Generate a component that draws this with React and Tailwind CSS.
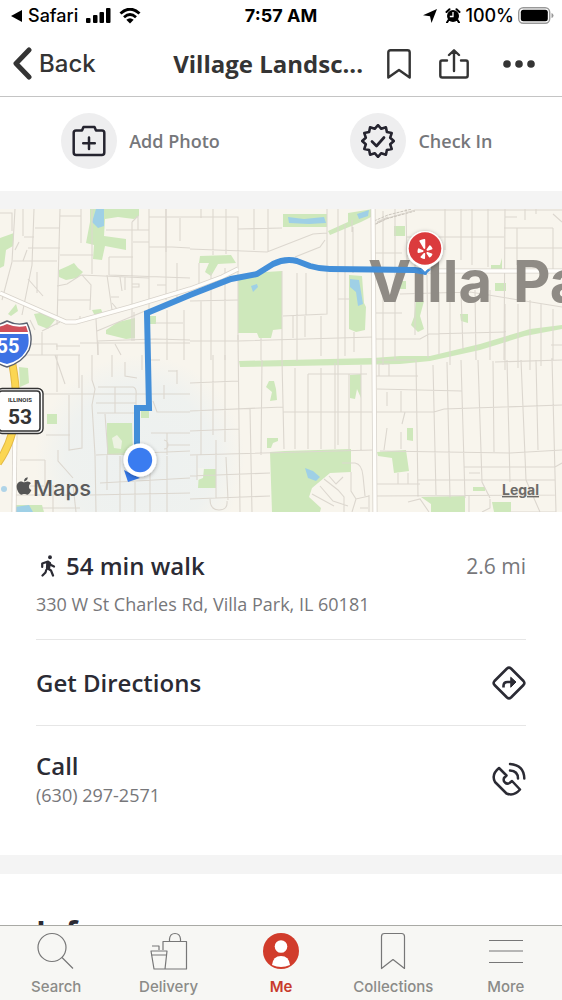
import React from "react";
import { FaApple, FaYelp } from "react-icons/fa";

const PARKS = [
  "M90 209H139V216L134 219L118 217L105 219L104 236L126 239V250L105 246L102 260L93 259L94 245L86 243L90 222Z",
  "M0 238L14 233L13 246L6 250L4 266L0 268Z",
  "M59 270L68 266L74 263L78 268L83 272L77 278L66 280L59 277Z",
  "M8 314L16 304L18 311L11 316Z",
  "M34 314L46 312L55 320L48 329L38 325Z",
  "M92 310L101 309L103 314L94 314Z",
  "M106 330L118 322L135 318V338L126 339L106 334Z",
  "M150 316H156V324H150Z",
  "M200 256L231 255L236 263L218 264L211 276L205 272L209 263H199Z",
  "M283 214H327V227H283Z",
  "M328 231L348 222L348 213L373 209V216L361 222L330 235Z",
  "M238 277L250 273L282 271V329L273 330L271 338H259L257 333L238 333Z",
  "M349 275L362 276L364 303L366 307L365 330L356 332L349 329Z",
  "M394 226H405V236H394Z",
  "M491 265H500L502 258V269H491Z",
  "M495 283H506V291H495Z",
  "M399 281H406V289H399Z",
  "M416 301L424 301L420 316L424 329L418 332L411 325L414 317Z",
  "M460 314H468V323L461 321Z",
  "M239 361L373 358L400 356L430 356L480 344L530 329L562 325V329L525 336L480 350L430 361L400 364L240 367Z",
  "M269 381L274 381L276 389L277 400L270 401L272 392L266 387Z",
  "M350 375L361 374L361 398L357 389L355 399L350 398Z",
  "M267 438H278V441L273 443L271 448H267Z",
  "M270 452L285 451L351 449V472L330 473L312 488L309 497L321 508L320 512H272Z",
  "M199 471L204 469H216V488H198Z",
  "M107 423H132L133 455H107Z",
  "M47 414H57V424H47Z",
  "M19 367L28 368L29 383L20 387Z",
  "M15 505H42L44 512H15Z",
  "M377 452L406 450L409 471L394 473L392 458L378 456Z",
  "M407 428H413V441L407 440Z",
  "M421 497L465 496V512H431L431 504Z",
  "M473 487H485V491H473Z",
  "M492 502H511V512H494Z",
  "M141 411H149V418H141Z",
];

const WATER = [
  "M96 209H104V226L98 228L92 222Z",
  "M288 217L304 219L324 217L326 223L309 224L289 223Z",
  "M357 214L369 210L368 216L359 219Z",
  "M350 279L359 280L361 292L363 304L358 306L356 292L350 287Z",
  "M251 286L257 284L258 287L253 292Z",
  "M305 468L313 471L320 477L316 481L308 478Z",
  "M15 507L29 505L33 512H15Z",
];

const STREETS = [
  "M0 213H12V231M15 209L12 262L2 300M23 209V236M34 209L32 265L22 315M24 237H34M60 209L57 325M60 216H81M35 228H60M28 248H60M13 261H57M60 255H93M81 209V243M82 275L91 285L90 310M92 209V274",
  "M106 230H149M132 222L138 216V230M132 222V341M133 242H149M134 312V341M149 209V310M166 209V252M180 218V241M149 217H190M149 247H172L190 248M109 257H133M109 257V275L190 278M107 275L112 310M120 277L122 291M125 277V290M132 284H139V287H132Z",
  "M57 286L67 284L81 275L149 278M57 300H90M37 272V293M28 279L43 296M157 285H166M166 209V300M177 263V300M15 250L19 242M23 261L27 250M80 316V322M57 350V344H0M42 332V355M56 346H80M98 342V355M115 344L121 355",
  "M42 331L60 322M30 320L35 330M97 331L145 311M97 341L155 339L190 340M80 343H190M167 310V360M184 310V360M155 323H183M96 319L98 355M112 303L118 310M111 297H119",
  "M190 217H238V292M201 209V218M213 209V255M226 209V254M190 249L267 252L313 234L327 233M238 229L282 228M254 209V250M268 209V251M238 252V340M295 257L320 247L325 240M327 209V314L283 316M282 271V360M297 273V361M306 273V315M338 209V445M352 220V232M353 227V273M345 224V356M338 299H350M354 332V352",
  "M199 263V294M211 272V360M225 268V360M190 301L238 300M201 301V360M190 341H238L373 337M321 316V356M305 316V337M293 316V338M261 338V360",
  "M190 383L238 381M190 411L283 407M190 431L239 429M190 455L373 450M190 476L270 473M190 499L270 496M201 360V455M213 355V435M225 355V442M238 335L240 512M250 408L252 512M262 360L261 455M282 360L284 449M295 368V449M308 374V449M321 368V449M335 363V449M349 374V450M361 365V450M308 374H367M283 412H373M197 455V480M216 440V498M210 499Q210 510 219 510Q228 510 227 501M226 457L228 500",
  "M342 463H355Q362 464 363 476L365 496M351 472V491L356 499L369 496M320 486L333 501L348 506M324 479L338 490L344 497V512M329 476L336 484L343 477M312 494L334 506M356 499L352 512M369 495V512M360 508H368",
  "M373 225L388 218L415 210H562M377 222L388 217M372 253H402M383 211V365M395 209V360M406 209L407 260M406 237H504M445 209V250M461 209V260M472 209V265M488 209V267M505 209L504 360M517 228V265M553 228V269M504 228H553M505 248H562M505 217H517M525 209V220M536 209V214M553 214L562 222",
  "M415 238V335M427 275L428 358M439 292V355M450 285V365M461 291L463 350M475 290L476 360M490 290V360M505 304V370M372 313H402M372 339H420L429 334L506 332M400 294L470 292L562 307M541 304V366M551 345H562M553 309V360M518 304V368M530 300V370",
  "M373 360H416L418 497M433 365L436 495M447 362L450 498M461 360L465 498M478 360L482 482L490 498M493 361L494 452M507 360L510 482M521 360L526 480L540 512M536 360L538 450M552 358L556 512M375 376H418M377 389L462 391M376 412H434L444 409L562 405M380 451L510 453L562 450M464 467H555L562 463M418 480H555M376 484H420M376 496L555 495M495 362L562 360M379 376V364H389V376M387 392V406M401 391V412M405 412L402 424M387 428L384 450M401 432V449M398 473V484M408 473V484M469 473H480M408 502L420 499L429 512M490 499V508L482 512M469 496V512M510 512H556",
  "M0 355H80M55 355L65 384M79 355V388M92 355V380L95 389L92 405L95 455L96 512M57 355V392M112 355V377M125 362V376L137 378M142 355V370M20 394H190M69 395V450L82 448V375M98 387H133Q137 388 136 396V412M96 403H136M115 387V413M97 413H134M105 414L108 455M107 455V490M120 456V512M135 482V512M150 460V512M167 456V512M96 455L190 451M100 483L190 478M90 495L190 493M151 433H190M167 433V455M164 440Q168 441 168 445Q168 449 164 449M168 445H190M153 401L157 412H190M164 385V399M158 394H168M177 370V384M168 371H177M150 374V360H160M45 460V485M58 450V461L73 478M46 435H70M20 460H45M45 486H15M53 485V512M73 485L76 512M15 495H75M42 508H80",
];

const MAJOR = [
  "M0 293L66 322H76L130 307L190 289L222 277L238 269",
  "M373 209L374 360L375 512",
  "M415 271H562",
  "M15 426L14 512",
];

function RouteMap() {
  return (
    <svg
      className="block h-[303px] w-full bg-[#f8f5ed]"
      viewBox="0 209 562 303"
      preserveAspectRatio="xMidYMid slice"
      role="img"
      aria-label="Walking route to Villa Park"
    >
      <defs>
        <radialGradient id="accuracy">
          <stop offset="0" stopColor="#ecf0f0" stopOpacity="0.9" />
          <stop offset="0.7" stopColor="#ebf0f0" stopOpacity="0.7" />
          <stop offset="1" stopColor="#ebf0f0" stopOpacity="0" />
        </radialGradient>
        <filter id="pinShadow" x="-30%" y="-30%" width="160%" height="160%">
          <feDropShadow dx="0" dy="1" stdDeviation="2" floodColor="#000" floodOpacity="0.35" />
        </filter>
      </defs>
      <rect x="0" y="209" width="562" height="303" fill="#f8f5ed" />
      <circle cx="140" cy="460" r="105" fill="url(#accuracy)" />
      <g fill="#cee8bb">
        {PARKS.map((d) => <path key={d} d={d} />)}
      </g>
      <g fill="#9fd0e6">
        {WATER.map((d) => <path key={d} d={d} />)}
      </g>
      <circle cx="4" cy="489" r="3" fill="#afd4e8" />
      <path d="M112 438L117 435L122 441L121 449L114 448Z" fill="#edf2e2" />
      <path d="M198 468H204L203 478L198 480Z" fill="#f3f4ee" />
      <g fill="none" stroke="#dcd7cf" strokeWidth="1.1">
        {STREETS.map((d) => <path key={d} d={d} />)}
      </g>
      <path d="M372 226L386 219L415 211M374 221L388 215L412 209" fill="none" stroke="#cbc6bd" strokeWidth="1" strokeDasharray="3 1" />
      <g fill="none" stroke="#d8d3cb" strokeWidth="5">
        {MAJOR.map((d) => <path key={d} d={d} />)}
      </g>
      <g fill="none" stroke="#fffefb" strokeWidth="3.4">
        {MAJOR.map((d) => <path key={d} d={d} />)}
      </g>
      <path d="M12 362Q17 388 16 410Q14 440 -2 463" fill="none" stroke="#e3b944" strokeWidth="8" />
      <path d="M12 362Q17 388 16 410Q14 440 -2 463" fill="none" stroke="#fbd652" strokeWidth="6" />

      <g fontSize="58" className="fill-[#8f8b85] font-['Inter',sans-serif] font-bold">
        <text x="368" y="302">Villa</text>
        <text x="513" y="302">Park</text>
      </g>

      <path
        d="M137 450V408H149L147 313L190 295L231 279L257 274L273 264Q285 258 297 261L310 266Q320 269 330 269L415 270L427 272"
        fill="none" stroke="#438fd9" strokeWidth="6" strokeLinejoin="miter"
      />

      <path d="M-14 327Q-3 326 7 321Q17 326 27 323Q34 338 29 350Q23 362 7 367Q-9 362 -15 350Z" fill="#fff" stroke="#59606f" strokeWidth="1.4" />
      <path d="M-12 329Q-2 328 7 324Q16 328 26 326L28 332H-14Z" fill="#cf505a" />
      <path d="M-14 334H28Q30 345 26 351Q20 361 7 364Q-6 361 -14 350Z" fill="#3d72e4" />
      <text x="8" y="353" fontSize="20" textAnchor="middle" className="fill-white font-['Roboto',sans-serif] font-bold">55</text>

      <rect x="-3" y="388.500" width="46" height="45" rx="5" fill="#fff" stroke="#333" strokeWidth="1.400" />
      <rect x="-1" y="391" width="41" height="40" rx="3" fill="#fff" stroke="#333" strokeWidth="1.600" />
      <text x="20" y="402" fontSize="6" textAnchor="middle" className="fill-[#333] font-['Roboto',sans-serif] font-bold">ILLINOIS</text>
      <text x="20" y="424" fontSize="21" textAnchor="middle" className="fill-[#333] font-['Roboto',sans-serif] font-bold">53</text>

      <path d="M124 470L128 482L140 478Z" fill="#3578e8" />
      <circle cx="140" cy="460" r="16.500" fill="#fff" filter="url(#pinShadow)" />
      <circle cx="140" cy="460" r="12.200" fill="#3a7cf0" />

      <path d="M425 272Q421 267 416 265Q407 260 407 249A18 18 0 0 1 443 249Q443 260 434 265Q429 267 425 272Z" fill="#fff" filter="url(#pinShadow)" />
      <path d="M419 269.500L425 275L431 269.500L428 269L425 272L422 269Z" fill="#438fd9" />
      <circle cx="425" cy="248.500" r="16.300" fill="#db3b3d" />
      <FaYelp x="415" y="239" size={20} color="#fff" />

      <FaApple x="14" y="476" size={20} color="#555" />
      <text x="33" y="496" fontSize="22" className="fill-[#5c5c5c] font-['Inter',sans-serif] font-medium">Maps</text>
      <a href="#legal">
        <text x="502" y="495" fontSize="14" className="fill-[#6d6b68] font-['Inter',sans-serif] font-bold underline">Legal</text>
      </a>
    </svg>
  );
}

function StatusBar() {
  return (
    <div className="grid h-[31px] grid-cols-3 items-center px-2 font-['Inter',sans-serif] text-lg leading-7 text-black">
      <div className="flex items-center gap-1 font-medium">
        <svg className="h-3 w-4" viewBox="0 0 16 12"><path d="M3 6L14 0V12Z" /></svg>
        <a href="#safari">Safari</a>
        <svg className="ml-1 h-4 w-[25px]" viewBox="0 0 25 16">
          <rect x="0" y="10" width="4.500" height="5" rx="1" />
          <rect x="7" y="7" width="4.500" height="8" rx="1" />
          <rect x="13.500" y="4" width="4.500" height="11" rx="1" />
          <rect x="20" y="0" width="4.500" height="15" rx="1" />
        </svg>
        <svg className="ml-1 h-4 w-[22px]" viewBox="0 0 22 16" fill="none" stroke="#000">
          <path d="M1.500 5.500Q11 -3 20.500 5.500" strokeWidth="3" />
          <path d="M5 9.200Q11 3.800 17 9.200" strokeWidth="2.800" />
          <path d="M11 15.500L7.300 11.800Q11 8.600 14.700 11.800Z" fill="#000" stroke="none" />
        </svg>
      </div>
      <div className="text-center font-bold">7:57 AM</div>
      <div className="flex items-center justify-end gap-1 font-medium">
        <svg className="size-[14px]" viewBox="0 0 14 14"><path d="M14 0L8.500 14L7 7.200L0 6.300Z" /></svg>
        <svg className="ml-1 h-[15px] w-4" viewBox="0 0 16 15">
          <circle cx="8" cy="8" r="6" />
          <path d="M1.500 4L4.500 1.200M14.500 4L11.500 1.200M3.500 12L2 14.500M12.500 12L14 14.500" stroke="#000" strokeWidth="2" strokeLinecap="round" />
          <path d="M8 4V8.500H4.800" fill="none" stroke="#fff" strokeWidth="1.300" />
        </svg>
        <span>100%</span>
        <svg className="h-[17px] w-9" viewBox="0 0 36 17">
          <rect x="0.700" y="0.700" width="31" height="15.600" rx="4.500" fill="#fff" stroke="#999" strokeWidth="1.400" />
          <rect x="2.800" y="2.800" width="27" height="11.400" rx="2.500" />
          <path d="M33.500 6V11Q35.500 10.500 35.500 8.500Q35.500 6.500 33.500 6Z" fill="#999" />
        </svg>
      </div>
    </div>
  );
}

function NavBar() {
  return (
    <header className="flex h-[66px] items-center border-b border-[#c4c4c4] px-3 text-[#343434]">
      <button className="flex items-center gap-[7px] font-['Inter',sans-serif] text-2xl font-medium leading-8">
        <svg className="h-[33px] w-5" viewBox="0 0 20 33" fill="none" stroke="currentColor" strokeWidth="5" strokeLinecap="round" strokeLinejoin="round">
          <path d="M17 3L4 16.500L17 30" />
        </svg>
        Back
      </button>
      <h1 className="flex-1 truncate pr-6 text-right text-2xl font-bold leading-8">Village Landsc...</h1>
      <div className="flex items-center gap-7">
        <button aria-label="Bookmark">
          <svg className="block h-[30px] w-6" viewBox="0 0 24 30" fill="none" stroke="currentColor" strokeWidth="2.400" strokeLinejoin="round">
            <path d="M1.300 28.500V3.500Q1.300 1.300 3.500 1.300H20.500Q22.700 1.300 22.700 3.500V28.500L12 21Z" />
          </svg>
        </button>
        <button aria-label="Share">
          <svg className="block h-[30px] w-[30px]" viewBox="0 0 30 30" fill="none" stroke="currentColor" strokeWidth="2.400" strokeLinecap="round" strokeLinejoin="round">
            <path d="M8 11.500H3Q1.300 11.500 1.300 13.200V26.500Q1.300 28.500 3.300 28.500H26.700Q28.700 28.500 28.700 26.500V13.200Q28.700 11.500 27 11.500H22M15 22V1.500M10 6L15 1.300L20 6" />
          </svg>
        </button>
        <button aria-label="More options" className="ml-1.5 mr-[15px]">
          <svg className="block h-2 w-8" viewBox="0 0 32 8" fill="currentColor">
            <circle cx="4" cy="4" r="3.800" /><circle cx="16" cy="4" r="3.800" /><circle cx="28" cy="4" r="3.800" />
          </svg>
        </button>
      </div>
    </header>
  );
}

function starPoints() {
  return Array.from({ length: 24 }, (_, i) => {
    const radius = i % 2 === 0 ? 15.8 : 12.6;
    const angle = (i * Math.PI) / 12 - Math.PI / 2;
    return `${(17 + radius * Math.cos(angle)).toFixed(1)},${(17 + radius * Math.sin(angle)).toFixed(1)}`;
  }).join(" ");
}

function Actions() {
  return (
    <section className="grid h-[94px] grid-cols-2 pb-1.5 text-lg font-semibold text-[#76777b]">
      <button className="flex items-center justify-center gap-3">
        <span className="grid size-14 place-items-center rounded-full bg-[#eeeeef]">
          <svg className="size-[34px]" viewBox="0 0 34 34" fill="none" stroke="#25242f" strokeWidth="2.500" strokeLinecap="round" strokeLinejoin="round">
            <path d="M10 6.500L11.500 3H22.500L24 6.500H30Q32.300 6.500 32.300 8.800V28.500Q32.300 31 29.800 31H4.200Q1.700 31 1.700 28.500V8.800Q1.700 6.500 4 6.500ZM17 13.500V25M11.200 19.200H22.800" />
          </svg>
        </span>
        Add Photo
      </button>
      <button className="flex items-center justify-center gap-3">
        <span className="grid size-14 place-items-center rounded-full bg-[#eeeeef]">
          <svg className="size-[34px]" viewBox="0 0 34 34" fill="none" stroke="#25242f" strokeWidth="2.600" strokeLinecap="round" strokeLinejoin="round">
            <polygon points={starPoints()} />
            <path d="M11 17.500L15.500 22L23 13.500" strokeWidth="2.700" />
          </svg>
        </span>
        Check In
      </button>
    </section>
  );
}

function Details() {
  return (
    <section className="px-9 text-[#2b2b34]">
      <div className="flex h-[128px] flex-col justify-center gap-2 border-b border-[#e6e6e6] pt-4">
        <div className="flex items-center">
          <svg className="mx-1 h-[22px] w-4" viewBox="0 0 16 22" fill="none" stroke="currentColor" strokeWidth="2.200" strokeLinecap="round" strokeLinejoin="round">
            <circle cx="10" cy="2.200" r="1.200" fill="currentColor" strokeWidth="1.500" />
            <path d="M2.200 12V8.500L8 6.500L11 10L14 11.500M8 6.500L7 13L11 15.500L13 20.500M6.200 15L5.500 17.500L2.500 20.500" />
            <path d="M7.500 7L10 8L9 13.500H7Z" fill="currentColor" />
          </svg>
          <h2 className="ml-1.5 flex-1 text-2xl font-semibold leading-8">54 min walk</h2>
          <span className="text-[21px] leading-8 text-[#77777a]">2.6 mi</span>
        </div>
        <p className="text-lg leading-7 text-[#77777a]">330 W St Charles Rd, Villa Park, IL 60181</p>
      </div>
      <button className="flex h-[86px] w-full items-center justify-between border-b border-[#e6e6e6] text-left">
        <span className="text-2xl font-semibold leading-8">Get Directions</span>
        <svg className="size-[34px]" viewBox="0 0 34 34" fill="none" stroke="currentColor" strokeWidth="2.600" strokeLinecap="round" strokeLinejoin="round">
          <path d="M15 2.500Q17 .8 19 2.500L31.500 15Q33.200 17 31.500 19L19 31.500Q17 33.200 15 31.500L2.500 19Q.8 17 2.500 15Z" />
          <path d="M11.500 21.500V20Q11.500 16 15.500 16H20" strokeLinecap="butt" />
          <path d="M19 11.500L24 16L19 21Z" fill="currentColor" strokeWidth="1" />
        </svg>
      </button>
      <button className="flex h-[129px] w-full items-center justify-between pb-6 text-left">
        <span className="block">
          <span className="block text-2xl font-semibold leading-8">Call</span>
          <span className="block text-lg leading-[26px] text-[#77777a]">(630) 297-2571</span>
        </span>
        <svg className="size-[34px]" viewBox="0 0 34 34" fill="none" stroke="currentColor" strokeWidth="2.500" strokeLinecap="round" strokeLinejoin="round">
          <path d="M7 6L14.500 13.500L12 16Q11 19 13 20.500Q15 22.500 17.500 21L20 19L28 27.500Q22 34.500 14.500 31.500L3 20Q-1 12.500 7 6Z" />
          <path d="M18 8.500Q26 9 26 16.500M18 2Q32 3 32.300 16.500" />
        </svg>
      </button>
    </section>
  );
}

const TABS = [
  {
    label: "Search",
    icon: <path d="M15 1.500A14 14 0 1 0 15 29.500A14 14 0 1 0 15 1.500ZM25 25.500L36 36.500" />,
  },
  {
    label: "Delivery",
    icon: <path d="M13 18V9.500H36.500V37H4L1 19H17L15 37M1 23H16.500M9 18V14H2M19.500 9V7Q20 1.500 25 1.500Q30 1.500 30.500 7V9" />,
  },
  {
    label: "Me",
    active: true,
    icon: (
      <g stroke="none">
        <circle cx="19" cy="19" r="18" fill="#d13c2b" />
        <circle cx="19" cy="14.500" r="6.300" fill="#fff" />
        <path d="M10 33Q11 24 19 24Q27 24 28 33Q19 37 10 33Z" fill="#fff" />
      </g>
    ),
  },
  {
    label: "Collections",
    icon: <path d="M7.500 36.500V4.500Q7.500 1.500 10.500 1.500H27.500Q30.500 1.500 30.500 4.500V36.500L19 27.500Z" />,
  },
  {
    label: "More",
    icon: <path d="M2 8.500H36M2 19H36M2 30.500H36" />,
  },
];

function TabBar() {
  return (
    <nav className="grid h-[75px] shrink-0 grid-cols-5 border-t border-[#a9aaa5] bg-[#f7f7f4]">
      {TABS.map(({ label, icon, active }) => (
        <a
          key={label}
          href={`#${label.toLowerCase()}`}
          aria-current={active ? "page" : undefined}
          className={`flex flex-col items-center gap-[5px] pt-[6px] font-['Inter',sans-serif] text-[15px] leading-6 ${active ? "font-semibold text-[#c83b2c]" : "font-medium text-[#8b8b88]"}`}
        >
          <svg className="size-[38px]" viewBox="0 0 38 38" fill="none" stroke="#777" strokeWidth="1.200" strokeLinejoin="round">
            {icon}
          </svg>
          {label}
        </a>
      ))}
    </nav>
  );
}

export default function App() {
  return (
    <div className="flex h-dvh flex-col bg-white font-['Open_Sans',sans-serif]">
      <StatusBar />
      <NavBar />
      <main className="min-h-0 flex-1 overflow-y-auto [scrollbar-width:none]">
        <Actions />
        <div className="h-[18px] bg-[#f4f4f4]" />
        <RouteMap />
        <Details />
        <div className="h-[19px] bg-[#f4f4f4]" />
        <section className="px-9 pb-8 pt-[38px] text-[#2b2b34]">
          <h2 className="text-3xl font-bold leading-10">Info</h2>
        </section>
      </main>
      <TabBar />
    </div>
  );
}
